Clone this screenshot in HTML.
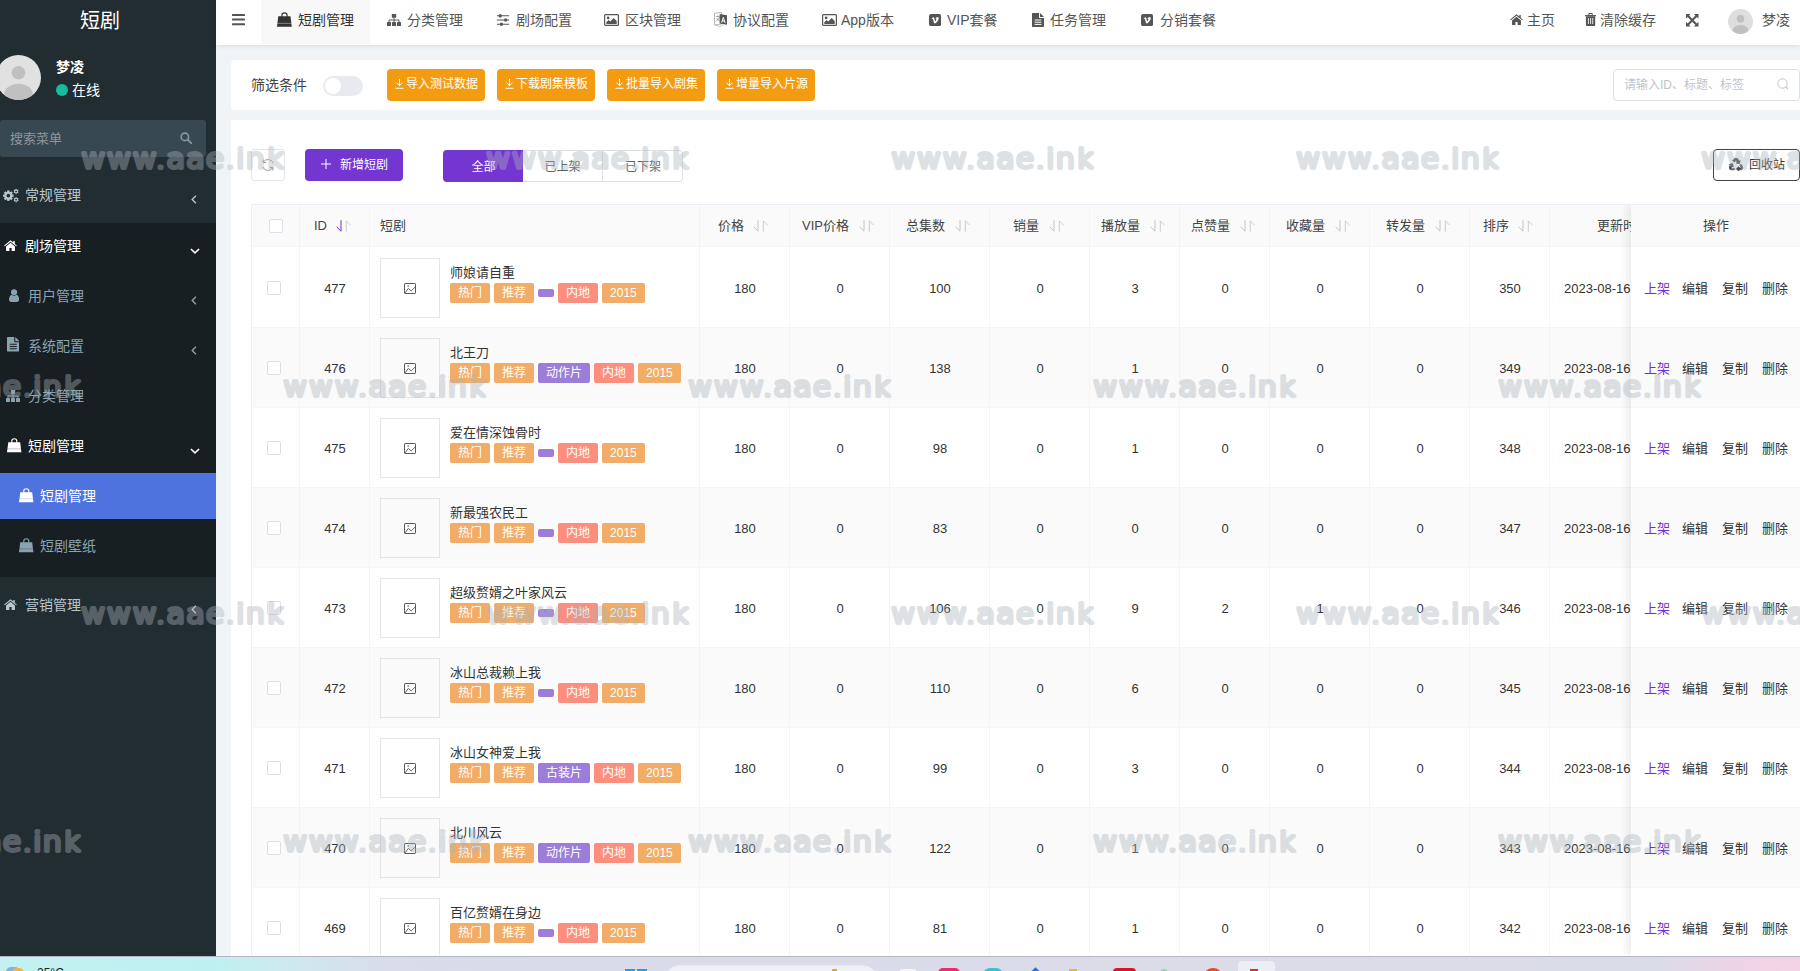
<!DOCTYPE html>
<html lang="zh-CN">
<head>
<meta charset="utf-8">
<title>短剧</title>
<style>
*{box-sizing:border-box;margin:0;padding:0}
html,body{width:1800px;height:971px;overflow:hidden;background:#f1f4f6;
  font-family:"Liberation Sans","Noto Sans CJK SC",sans-serif;font-size:14px;color:#444}
.abs{position:absolute}
svg{display:block}
/* ---------- sidebar ---------- */
#side{position:absolute;left:0;top:0;width:216px;height:956px;background:#222d32;overflow:hidden}
#logo{position:absolute;left:0;top:1px;width:200px;height:40px;line-height:40px;text-align:center;color:#fff;font-size:20px}
#avatar{position:absolute;left:-4px;top:55px;width:45px;height:45px;border-radius:50%;background:#e1e1e1;overflow:hidden}
#uname{position:absolute;left:56px;top:57px;color:#fff;font-weight:bold;font-size:14px;line-height:20px}
#ustat{position:absolute;left:56px;top:80px;color:#fff;font-size:14px;line-height:20px}
#ustat i{display:inline-block;width:12px;height:12px;border-radius:50%;background:#18bc9c;margin-right:4px;vertical-align:-1px}
#msearch{position:absolute;left:0;top:120px;width:206px;height:37px;background:#374850;border-radius:3px;color:#8c979c;font-size:13px;line-height:37px;padding-left:10px}
.mi{position:absolute;left:0;width:216px;height:50px;line-height:50px;color:#b8c7ce;font-size:14px}
.mi .ic{position:absolute;top:18px}
.mi .tx{position:absolute;top:0;white-space:nowrap}
.mi .ar{position:absolute;left:190px;top:20px}
.dark{background:#181f23}
/* ---------- top nav ---------- */
#nav{position:absolute;left:216px;top:0;width:1584px;height:45px;background:#fff;box-shadow:0 1px 4px rgba(0,21,41,.10)}
.tab{position:absolute;top:0;height:44px;line-height:40px;font-size:14px;color:#555;white-space:nowrap}
.tab .ic{position:absolute;top:13px}
.tab .tx{position:absolute;top:0}
.tabt{top:0;line-height:40px;font-size:14px;white-space:nowrap}
/* ---------- panels ---------- */
.panel{position:absolute;background:#fff;border-radius:4px}
.obtn{position:absolute;top:9px;height:32px;border-radius:4px;background:#f39c12;color:#fff;font-size:12px;line-height:31px;text-align:center;white-space:nowrap}
/* ---------- table ---------- */
#tbl{position:absolute;left:251px;top:204px;width:1560px;height:751px;overflow:hidden;border-top:1px solid #ebeef5;border-left:1px solid #ebeef5;background:#fff}
.hd{position:absolute;left:0;top:0;width:1560px;height:42px;background:#fafafa;border-bottom:1px solid #f5f5f8}
.row{position:absolute;left:0;width:1560px;height:80px;border-bottom:1px solid #f6f6f9}
.row.odd{background:#fafafa}
.vl{position:absolute;top:0;width:1px;height:751px;background:#f4f4f7}
.c{position:absolute;text-align:center;white-space:nowrap;color:#333;font-size:13px;line-height:20px}
.h{color:#444}
.cb{position:absolute;width:14px;height:14px;border:1px solid #dcdfe6;border-radius:2px;background:#fff}
.thumb{position:absolute;left:128px;width:60px;height:60px;border:1px solid #e4e4e4;background:#fff}
.odd .thumb{background:#fafafa}
.ttl{position:absolute;left:198px;font-size:13px;color:#333;line-height:20px;white-space:nowrap}
.tags{position:absolute;left:198px;white-space:nowrap;font-size:0}
.tg{display:inline-block;height:20px;line-height:20px;padding:0 8px;border-radius:2px;color:#fff;font-size:12px;margin-right:4px;vertical-align:top}
.t1{background:#f3ac66}.t2{background:#f3ac66}.t3{background:#9c7dd8}.t4{background:#fb8e7d}.t5{background:#f3ac66}
.t3e{display:inline-block;width:16px;height:8px;border-radius:2px;background:#9c7dd8;margin:6px 4px 0 0;vertical-align:top}
#fix{position:absolute;left:1379px;top:0;width:181px;height:751px;box-shadow:-4px 0 8px rgba(0,0,0,.08);background:transparent}
.op{position:absolute;font-size:13px;color:#333;line-height:20px;white-space:nowrap}
.op.p{color:#722ed1}
.wm{position:absolute;opacity:.39;pointer-events:none;overflow:visible}
#task{position:absolute;left:0;top:956px;width:1800px;height:15px;overflow:hidden;background:linear-gradient(90deg,#c3f1f1 0%,#bff0f1 12%,#cdeaee 16%,#d8dde9 21%,#d9dbe8 30%,#dcdce8 75%,#dadce8 92%,#ecd4e5 96%,#f3d3e3 100%);border-top:1px solid #b3b6c2}
</style>
</head>
<body>
<div id="side">
<div id="logo">短剧</div>
<div id="avatar"><svg width="45" height="45" viewBox="0 0 45 45"><circle cx="22.500" cy="17.800" r="6.800" fill="#c0c0c0"/><ellipse cx="22.500" cy="38.600" rx="14.200" ry="9.800" fill="#c0c0c0"/></svg></div>
<div id="uname">梦凌</div>
<div id="ustat"><i></i>在线</div>
<div id="msearch">搜索菜单<span class="abs" style="left:180px;top:12px"><svg width="12" height="12" viewBox="0 0 13 13" ><circle cx="5.300" cy="5.300" r="4" fill="none" stroke="#8c979c" stroke-width="1.8"/><path d="M8.300 8.300l3.800 3.800" stroke="#8c979c" stroke-width="2.1" stroke-linecap="round"/></svg></span></div>
<div class="abs dark" style="left:0;top:223px;width:216px;height:354px"></div>
<div class="abs" style="left:0;top:473px;width:216px;height:46px;background:#4e73df"></div>
<div class="mi" style="top:170px;color:#b8c7ce;"><span class="abs" style="left:3px;top:18px"><svg width="16" height="14.933333333333334" viewBox="0 0 15 14" ><rect x="3.9" y="2.29" width="2.2" height="2.4200000000000004" fill="#b8c7ce" transform="rotate(0.0 5 7.2)"/><rect x="3.9" y="2.29" width="2.2" height="2.4200000000000004" fill="#b8c7ce" transform="rotate(45.0 5 7.2)"/><rect x="3.9" y="2.29" width="2.2" height="2.4200000000000004" fill="#b8c7ce" transform="rotate(90.0 5 7.2)"/><rect x="3.9" y="2.29" width="2.2" height="2.4200000000000004" fill="#b8c7ce" transform="rotate(135.0 5 7.2)"/><rect x="3.9" y="2.29" width="2.2" height="2.4200000000000004" fill="#b8c7ce" transform="rotate(180.0 5 7.2)"/><rect x="3.9" y="2.29" width="2.2" height="2.4200000000000004" fill="#b8c7ce" transform="rotate(225.0 5 7.2)"/><rect x="3.9" y="2.29" width="2.2" height="2.4200000000000004" fill="#b8c7ce" transform="rotate(270.0 5 7.2)"/><rect x="3.9" y="2.29" width="2.2" height="2.4200000000000004" fill="#b8c7ce" transform="rotate(315.0 5 7.2)"/><circle cx="5" cy="7.2" r="3.7" fill="#b8c7ce"/><circle cx="5" cy="7.200" r="1.700" fill="#222d32"/><rect x="11.700000000000001" y="0.8400000000000002" width="1.2" height="1.32" fill="#b8c7ce" transform="rotate(0.0 12.3 3.2)"/><rect x="11.700000000000001" y="0.8400000000000002" width="1.2" height="1.32" fill="#b8c7ce" transform="rotate(60.0 12.3 3.2)"/><rect x="11.700000000000001" y="0.8400000000000002" width="1.2" height="1.32" fill="#b8c7ce" transform="rotate(120.0 12.3 3.2)"/><rect x="11.700000000000001" y="0.8400000000000002" width="1.2" height="1.32" fill="#b8c7ce" transform="rotate(180.0 12.3 3.2)"/><rect x="11.700000000000001" y="0.8400000000000002" width="1.2" height="1.32" fill="#b8c7ce" transform="rotate(240.0 12.3 3.2)"/><rect x="11.700000000000001" y="0.8400000000000002" width="1.2" height="1.32" fill="#b8c7ce" transform="rotate(300.0 12.3 3.2)"/><circle cx="12.3" cy="3.2" r="1.7" fill="#b8c7ce"/><circle cx="12.300" cy="3.200" r=".8" fill="#222d32"/><rect x="11.700000000000001" y="8.64" width="1.2" height="1.32" fill="#b8c7ce" transform="rotate(0.0 12.3 11)"/><rect x="11.700000000000001" y="8.64" width="1.2" height="1.32" fill="#b8c7ce" transform="rotate(60.0 12.3 11)"/><rect x="11.700000000000001" y="8.64" width="1.2" height="1.32" fill="#b8c7ce" transform="rotate(120.0 12.3 11)"/><rect x="11.700000000000001" y="8.64" width="1.2" height="1.32" fill="#b8c7ce" transform="rotate(180.0 12.3 11)"/><rect x="11.700000000000001" y="8.64" width="1.2" height="1.32" fill="#b8c7ce" transform="rotate(240.0 12.3 11)"/><rect x="11.700000000000001" y="8.64" width="1.2" height="1.32" fill="#b8c7ce" transform="rotate(300.0 12.3 11)"/><circle cx="12.3" cy="11" r="1.7" fill="#b8c7ce"/><circle cx="12.300" cy="11" r=".8" fill="#222d32"/></svg></span><span class="tx" style="left:25px">常规管理</span><span class="abs" style="left:191px;top:25px"><svg width="6" height="9" viewBox="0 0 6 9" ><path d="M4.900.8L1.200 4.500l3.700 3.700" fill="none" stroke="#b8c7ce" stroke-width="1.350"/></svg></span></div>
<div class="mi" style="top:221px;color:#fff;"><span class="abs" style="left:4px;top:19px"><svg width="13" height="11.142857142857142" viewBox="0 0 14 12" ><path d="M7 .3L.2 6l.7.850L7 1.800l6.100 5.050.7-.85L11.600 4.200V1H10v1.800z" fill="#fff"/><path d="M7 3L2.200 7v4.400c0 .3.300.6.600.6h3V8.600h2.400V12h3c.3 0 .6-.3.600-.6V7z" fill="#fff"/></svg></span><span class="tx" style="left:25px">剧场管理</span><span class="abs" style="left:190px;top:27px"><svg width="10" height="6" viewBox="0 0 10 6" ><path d="M.9 1L5 4.900 9.100 1" fill="none" stroke="#fff" stroke-width="1.600"/></svg></span></div>
<div class="mi" style="top:271px;color:#8aa4af;"><span class="abs" style="left:9px;top:18px"><svg width="10.153846153846153" height="12.923076923076923" viewBox="0 0 11 14" ><circle cx="5.500" cy="3.600" r="3.300" fill="#8aa4af"/><path d="M0 11.400c0-3 1.500-5 3-5.200.7.600 1.500 1 2.500 1s1.800-.4 2.500-1c1.500.2 3 2.200 3 5.200 0 1.600-1 2.600-2.400 2.600H2.400C1 14 0 13 0 11.400z" fill="#8aa4af"/></svg></span><span class="tx" style="left:28px">用户管理</span><span class="abs" style="left:191px;top:25px"><svg width="6" height="9" viewBox="0 0 6 9" ><path d="M4.900.8L1.200 4.500l3.700 3.700" fill="none" stroke="#8aa4af" stroke-width="1.350"/></svg></span></div>
<div class="mi" style="top:321px;color:#8aa4af;"><span class="abs" style="left:7px;top:16px"><svg width="12.428571428571429" height="14.5" viewBox="0 0 12 14" ><path d="M0 .6C0 .3.3 0 .6 0H7v4.400c0 .3.300.6.600.6H12v8.400c0 .3-.3.600-.6.600H.6C.3 14 0 13.700 0 13.400z" fill="#8aa4af"/><path d="M8 0l4 4H8z" fill="#8aa4af"/><path d="M2.600 7h6.800M2.600 9.200h6.800M2.600 11.400h6.800" stroke="#181f23" stroke-width="1" fill="none"/></svg></span><span class="tx" style="left:28px">系统配置</span><span class="abs" style="left:191px;top:25px"><svg width="6" height="9" viewBox="0 0 6 9" ><path d="M4.900.8L1.200 4.500l3.700 3.700" fill="none" stroke="#8aa4af" stroke-width="1.350"/></svg></span></div>
<div class="mi" style="top:371px;color:#8aa4af;"><span class="abs" style="left:6px;top:18px"><svg width="14" height="14" viewBox="0 0 16 16" ><rect x="5.5" y="1" width="5" height="4.4" rx=".6" fill="#8aa4af"/><rect x="0" y="10.4" width="4.6" height="4.4" rx=".6" fill="#8aa4af"/><rect x="5.7" y="10.4" width="4.6" height="4.4" rx=".6" fill="#8aa4af"/><rect x="11.4" y="10.4" width="4.6" height="4.4" rx=".6" fill="#8aa4af"/><path d="M8 5v5.5M2.3 10.5V8h11.4v2.5" fill="none" stroke="#8aa4af" stroke-width="1.1"/></svg></span><span class="tx" style="left:28px">分类管理</span></div>
<div class="mi" style="top:421px;color:#fff;"><span class="abs" style="left:7px;top:17px"><svg width="14.6" height="14.6" viewBox="0 0 15 15" ><path d="M1.300 4.300h12.200l1.300 10.400H0z" fill="#fff"/><path d="M4.900 6V3.400a2.600 2.600 0 0 1 5.200 0V6" fill="none" stroke="#fff" stroke-width="1.150"/><rect x=".3" y="10.900" width="14.300" height=".6" fill="#181f23" opacity=".45"/></svg></span><span class="tx" style="left:28px">短剧管理</span><span class="abs" style="left:190px;top:27px"><svg width="10" height="6" viewBox="0 0 10 6" ><path d="M.9 1L5 4.900 9.100 1" fill="none" stroke="#fff" stroke-width="1.600"/></svg></span></div>
<div class="mi" style="top:471px;color:#fff;"><span class="abs" style="left:19px;top:17px"><svg width="14.6" height="14.6" viewBox="0 0 15 15" ><path d="M1.300 4.300h12.200l1.300 10.400H0z" fill="#fff"/><path d="M4.900 6V3.400a2.600 2.600 0 0 1 5.200 0V6" fill="none" stroke="#fff" stroke-width="1.150"/><rect x=".3" y="10.900" width="14.300" height=".6" fill="#4e73df" opacity=".45"/></svg></span><span class="tx" style="left:40px">短剧管理</span></div>
<div class="mi" style="top:521px;color:#8aa4af;"><span class="abs" style="left:19px;top:17px"><svg width="14.6" height="14.6" viewBox="0 0 15 15" ><path d="M1.300 4.300h12.200l1.300 10.400H0z" fill="#8aa4af"/><path d="M4.900 6V3.400a2.600 2.600 0 0 1 5.200 0V6" fill="none" stroke="#8aa4af" stroke-width="1.150"/><rect x=".3" y="10.900" width="14.300" height=".6" fill="#181f23" opacity=".45"/></svg></span><span class="tx" style="left:40px">短剧壁纸</span></div>
<div class="mi" style="top:580px;color:#b8c7ce;"><span class="abs" style="left:4px;top:19px"><svg width="13" height="11.142857142857142" viewBox="0 0 14 12" ><path d="M7 .3L.2 6l.7.850L7 1.800l6.100 5.050.7-.85L11.600 4.200V1H10v1.800z" fill="#b8c7ce"/><path d="M7 3L2.200 7v4.400c0 .3.300.6.600.6h3V8.600h2.400V12h3c.3 0 .6-.3.600-.6V7z" fill="#b8c7ce"/></svg></span><span class="tx" style="left:25px">营销管理</span><span class="abs" style="left:191px;top:25px"><svg width="6" height="9" viewBox="0 0 6 9" ><path d="M4.900.8L1.200 4.500l3.700 3.700" fill="none" stroke="#b8c7ce" stroke-width="1.350"/></svg></span></div>
</div>
<div id="nav">
<span class="abs" style="left:16px;top:14px"><svg width="13" height="12" viewBox="0 0 13 12" ><rect x="0" y="0" width="13" height="2" rx=".5" fill="#555"/><rect x="0" y="4.600" width="13" height="2" rx=".5" fill="#555"/><rect x="0" y="9.200" width="13" height="2" rx=".5" fill="#555"/></svg></span>
<div class="abs" style="left:45px;top:0;width:109px;height:44px;background:#f8f8f8"></div>
<span class="abs" style="left:61px;top:12px"><svg width="15" height="15" viewBox="0 0 15 15" ><path d="M1.300 4.300h12.200l1.300 10.400H0z" fill="#333"/><path d="M4.900 6V3.400a2.600 2.600 0 0 1 5.200 0V6" fill="none" stroke="#333" stroke-width="1.150"/><rect x=".3" y="10.900" width="14.300" height=".7" fill="#fff" opacity=".55"/></svg></span><span class="abs tabt" style="left:82px;color:#333">短剧管理</span>
<span class="abs" style="left:171px;top:13px"><svg width="14" height="14" viewBox="0 0 16 16" ><rect x="5.5" y="1" width="5" height="4.4" rx=".6" fill="#555"/><rect x="0" y="10.4" width="4.6" height="4.4" rx=".6" fill="#555"/><rect x="5.7" y="10.4" width="4.6" height="4.4" rx=".6" fill="#555"/><rect x="11.4" y="10.4" width="4.6" height="4.4" rx=".6" fill="#555"/><path d="M8 5v5.5M2.3 10.5V8h11.4v2.5" fill="none" stroke="#555" stroke-width="1.1"/></svg></span><span class="abs tabt" style="left:191px;color:#555">分类管理</span>
<span class="abs" style="left:280px;top:13px"><svg width="14" height="14" viewBox="0 0 16 16" ><path d="M1 3.2h14M1 8h14M1 12.8h14" stroke="#555" stroke-width="1.3" fill="none"/><rect x="3.2" y="1.4" width="3.2" height="3.6" rx=".6" fill="#555"/><rect x="9.4" y="6.2" width="3.2" height="3.6" rx=".6" fill="#555"/><rect x="4.6" y="11" width="3.2" height="3.6" rx=".6" fill="#555"/></svg></span><span class="abs tabt" style="left:300px;color:#555">剧场配置</span>
<span class="abs" style="left:388px;top:14px"><svg width="15" height="12" viewBox="0 0 15 12" ><rect x=".6" y=".6" width="13.800" height="10.800" rx="1" fill="none" stroke="#555" stroke-width="1.200"/><circle cx="4.100" cy="3.900" r="1.350" fill="#555"/><path d="M2.300 9.900V8.300l2.300-2.200 1.600 1.500 3.500-3.600 3 2.900v3z" fill="#555"/></svg></span><span class="abs tabt" style="left:409px;color:#555">区块管理</span>
<span class="abs" style="left:498px;top:12px"><svg width="13" height="15" viewBox="0 0 13 15" ><path d="M.5 1.200L7.500.5v11.500l-7 1z" fill="#fff" stroke="#555" stroke-width=".8" opacity=".55"/><path d="M2 4.500h3.500M3.700 3.500v1M2.300 9c1.600-.8 2.500-2.300 2.800-4M2.600 6c.6 1.400 1.500 2.300 2.800 2.900" stroke="#555" stroke-width=".7" fill="none" opacity=".7"/><path d="M5.600 2l7.400 1.200v9.600l-7.400-1.300z" fill="#555"/><path d="M1.500 13.200l4.500 1.300 3-1.600" fill="none" stroke="#555" stroke-width=".7" opacity=".5"/><path d="M7.600 10.600l1.700-5.200 1.900 5.700M8.200 9h2.400" stroke="#fff" stroke-width=".95" fill="none"/></svg></span><span class="abs tabt" style="left:517px;color:#555">协议配置</span>
<span class="abs" style="left:606px;top:14px"><svg width="15" height="12" viewBox="0 0 15 12" ><rect x=".6" y=".6" width="13.800" height="10.800" rx="1" fill="none" stroke="#555" stroke-width="1.200"/><circle cx="4.100" cy="3.900" r="1.350" fill="#555"/><path d="M2.300 9.900V8.300l2.300-2.200 1.600 1.500 3.500-3.600 3 2.900v3z" fill="#555"/></svg></span><span class="abs tabt" style="left:625px;color:#555">App版本</span>
<span class="abs" style="left:712.5px;top:14px"><svg width="12.2" height="12.2" viewBox="0 0 14 14" ><rect x="0" y="0" width="14" height="14" rx="2.6" fill="#555"/><path d="M3 5.2c.8-.8 1.6-1.6 2.4-1.4 1 .2.8 2.4 1.4 4 .3.8.6.6 1.2-.4.6-1 .8-2-.4-1.6.5-1.6 1.600-2.400 2.800-2.200 1.300.3.900 2.200-.1 3.900-1 1.700-2.600 3.500-3.600 3.500-1.200 0-1.500-2.600-2-4.600-.3-1-.6-1-1.200-.6z" fill="#fff"/></svg></span><span class="abs tabt" style="left:731px;color:#555">VIP套餐</span>
<span class="abs" style="left:816px;top:13px"><svg width="12.0" height="14" viewBox="0 0 12 14" ><path d="M0 .6C0 .3.3 0 .6 0H7v4.400c0 .3.300.6.600.6H12v8.400c0 .3-.3.600-.6.600H.6C.3 14 0 13.700 0 13.400z" fill="#555"/><path d="M8 0l4 4H8z" fill="#555"/><path d="M2.600 7h6.800M2.600 9.200h6.800M2.600 11.400h6.800" stroke="#fff" stroke-width="1" fill="none"/></svg></span><span class="abs tabt" style="left:834px;color:#555">任务管理</span>
<span class="abs" style="left:925px;top:14px"><svg width="12.2" height="12.2" viewBox="0 0 14 14" ><rect x="0" y="0" width="14" height="14" rx="2.6" fill="#555"/><path d="M3 5.2c.8-.8 1.6-1.6 2.4-1.4 1 .2.8 2.4 1.4 4 .3.8.6.6 1.2-.4.6-1 .8-2-.4-1.6.5-1.6 1.600-2.400 2.800-2.200 1.300.3.900 2.200-.1 3.900-1 1.700-2.600 3.500-3.600 3.500-1.200 0-1.500-2.600-2-4.600-.3-1-.6-1-1.200-.6z" fill="#fff"/></svg></span><span class="abs tabt" style="left:944px;color:#555">分销套餐</span>
<span class="abs" style="left:1294px;top:14px"><svg width="13" height="11.142857142857142" viewBox="0 0 14 12" ><path d="M7 .3L.2 6l.7.850L7 1.800l6.100 5.050.7-.85L11.600 4.200V1H10v1.800z" fill="#555"/><path d="M7 3L2.200 7v4.400c0 .3.300.6.600.6h3V8.600h2.400V12h3c.3 0 .6-.3.600-.6V7z" fill="#555"/></svg></span><span class="abs tabt" style="left:1311px;color:#555">主页</span>
<span class="abs" style="left:1369px;top:13px"><svg width="11.142857142857142" height="13" viewBox="0 0 12 14" ><path d="M0 2.200h12v1.300H0z" fill="#555"/><path d="M4 2.200l.6-1.600h2.800l.6 1.600" fill="none" stroke="#555" stroke-width="1.1"/><path d="M1 3.500h10v9.100c0 .8-.6 1.400-1.400 1.400H2.400c-.8 0-1.400-.6-1.400-1.400z" fill="#555"/><path d="M3.700 5.400v6.400M6 5.400v6.400M8.300 5.400v6.400" stroke="#fff" stroke-width=".9"/></svg></span><span class="abs tabt" style="left:1384px;color:#555">清除缓存</span>
<span class="abs" style="left:1470px;top:14px"><svg width="12.5" height="12.5" viewBox="0 0 14 14" ><path d="M0 0h5.200L3.400 1.800 7 5.400l3.600-3.600L8.800 0H14v5.200l-1.800-1.800L8.600 7l3.600 3.600L14 8.800V14H8.800l1.800-1.800L7 8.600l-3.600 3.600L5.200 14H0V8.800l1.800 1.800L5.400 7 1.800 3.400 0 5.200z" fill="#555"/></svg></span><span class="abs tabt" style="left:1484px;color:#555"></span>
<div class="abs" style="left:1512px;top:9px;width:25px;height:25px;border-radius:50%;background:#dedede;overflow:hidden"><svg width="25" height="25" viewBox="0 0 45 45"><circle cx="22.500" cy="17.800" r="6.800" fill="#c0c0c0"/><ellipse cx="22.500" cy="38.600" rx="14.200" ry="9.800" fill="#c0c0c0"/></svg></div>
<span class="abs" style="left:-216px;top:0px"></span><span class="abs tabt" style="left:1546px;color:#555">梦凌</span>
</div>
<div class="panel" style="left:231px;top:60px;width:1580px;height:50px">
<span class="abs" style="left:20px;top:15px;line-height:20px;font-size:14px;color:#444">筛选条件</span>
<span class="abs" style="left:92px;top:16px;width:40px;height:20px;border-radius:10px;background:#e8eaef"><i class="abs" style="left:2px;top:2px;width:16px;height:16px;border-radius:50%;background:#fff"></i></span>
<div class="obtn" style="left:156px;width:98px"><span style="display:inline-block;vertical-align:-1px;margin-right:2px;margin-left:1px"><svg width="9" height="10" viewBox="0 0 9 10" ><path d="M4.500 0v6.500M1.600 3.800l2.900 2.900 2.900-2.900M.5 9.300h8" fill="none" stroke="#fff" stroke-width="1"/></svg></span>导入测试数据</div>
<div class="obtn" style="left:266px;width:98px"><span style="display:inline-block;vertical-align:-1px;margin-right:2px;margin-left:1px"><svg width="9" height="10" viewBox="0 0 9 10" ><path d="M4.500 0v6.500M1.600 3.800l2.900 2.900 2.900-2.900M.5 9.300h8" fill="none" stroke="#fff" stroke-width="1"/></svg></span>下载剧集模板</div>
<div class="obtn" style="left:376px;width:98px"><span style="display:inline-block;vertical-align:-1px;margin-right:2px;margin-left:1px"><svg width="9" height="10" viewBox="0 0 9 10" ><path d="M4.500 0v6.500M1.600 3.800l2.900 2.900 2.900-2.900M.5 9.300h8" fill="none" stroke="#fff" stroke-width="1"/></svg></span>批量导入剧集</div>
<div class="obtn" style="left:486px;width:98px"><span style="display:inline-block;vertical-align:-1px;margin-right:2px;margin-left:1px"><svg width="9" height="10" viewBox="0 0 9 10" ><path d="M4.500 0v6.500M1.600 3.800l2.900 2.900 2.900-2.900M.5 9.300h8" fill="none" stroke="#fff" stroke-width="1"/></svg></span>增量导入片源</div>
<div class="abs" style="left:1382px;top:9px;width:187px;height:32px;border:1px solid #dcdfe6;border-radius:4px;background:#fff;color:#c0c4cc;font-size:12px;line-height:31px;padding-left:10px">请输入ID、标题、标签<span class="abs" style="left:163px;top:8px"><svg width="12" height="12" viewBox="0 0 12 12"><circle cx="5.500" cy="5.500" r="4.700" fill="none" stroke="#c0c4cc" stroke-width="1"/><path d="M9 9l1.600 1.600" stroke="#c0c4cc" stroke-width="1.100" stroke-linecap="round"/></svg></span></div>
</div>
<div class="panel" style="left:231px;top:120px;width:1580px;height:860px;border-radius:0"></div>
<div class="abs" style="left:251px;top:149px;width:34px;height:32px;border:1px solid #e6e6e6;border-radius:3px;background:#fff"><span class="abs" style="left:9px;top:8px"><svg width="14" height="14" viewBox="0 0 14 14" ><path d="M12.200 5.200A5.500 5.500 0 0 0 2.300 4.200M1.800 8.800a5.500 5.500 0 0 0 9.900 1" fill="none" stroke="#999" stroke-width="1"/><path d="M2.200 1.500v3h3M11.800 12.500v-3h-3" fill="none" stroke="#999" stroke-width="1"/></svg></span></div>
<div class="abs" style="left:305px;top:149px;width:98px;height:32px;border-radius:4px;background:#7336d0;color:#fff;font-size:12px;line-height:32px"><span class="abs" style="left:16px;top:10px"><svg width="10" height="10" viewBox="0 0 11 11" ><path d="M5.500 0v11M0 5.500h11" stroke="#fff" stroke-width="1.100"/></svg></span><span class="abs" style="left:35px;top:0">新增短剧</span></div>
<div class="abs" style="left:443px;top:150px;width:240px;height:32px;border:1px solid #dcdfe6;border-radius:4px;background:#fff"></div>
<div class="abs" style="left:443px;top:150px;width:80px;height:32px;border-radius:4px 0 0 4px;background:#7336d0;color:#fff;font-size:12px;line-height:34px;text-align:center;padding-left:1px">全部</div>
<div class="abs" style="left:523px;top:150px;width:80px;height:32px;border-right:1px solid #dcdfe6;color:#606266;font-size:12px;line-height:34px;text-align:center">已上架</div>
<div class="abs" style="left:603px;top:150px;width:80px;height:32px;color:#606266;font-size:12px;line-height:34px;text-align:center">已下架</div>
<div class="abs" style="left:1713px;top:149px;width:87px;height:32px;border:1px solid #444;border-radius:4px;background:#fff;color:#333;font-size:12px;line-height:30px"><span class="abs" style="left:15px;top:8px"><svg width="14" height="13" viewBox="0 0 14 13" ><g fill="#444" stroke="#444" stroke-width=".7" stroke-linejoin="round"><path d="M5 1.200C5.500.4 6.300 0 7 0s1.500.4 2 1.200l1.200 2 1-.6-.8 3.200-3.200-.8 1-.6-1-1.800c-.2-.3-.5-.3-.7 0L5.700 4 3.600 2.800z"/><path d="M12.200 6.400l1.400 2.400c.8 1.400-.2 3-1.800 3H9.600v1.200L7.200 10.800l2.400-2.200v1.200h2c.4 0 .6-.4.400-.700l-1.200-2z"/><path d="M5.600 11.800H2.200c-1.600 0-2.600-1.600-1.800-3l1-1.800-1-.6 3.200-.8.800 3.200-1-.6-1 1.700c-.2.300 0 .7.400.700h2.800z"/></g></svg></span><span class="abs" style="left:35px;top:0">回收站</span></div>
<div id="tbl">
<div class="hd"></div>
<div class="row" style="top:43px">
<span class="cb" style="left:15px;top:33px"></span>
<span class="c" style="left:48px;width:70px;top:31px">477</span>
<span class="thumb" style="top:10px"><span class="abs" style="left:23px;top:24px"><svg width="12" height="11" viewBox="0 0 12 11" ><rect x=".5" y=".5" width="11" height="10" rx=".6" fill="none" stroke="#5a5a5a" stroke-width="1"/><path d="M.8 10.200L4.300 5.400 7.200 7.900 11.200 4" fill="none" stroke="#5a5a5a" stroke-width=".9"/><circle cx="4.200" cy="3.100" r=".75" fill="#5a5a5a"/></svg></span></span>
<span class="ttl" style="top:15px">师娘请自重</span>
<span class="tags" style="top:35px"><span class="tg t1">热门</span><span class="tg t2">推荐</span><span class="t3e"></span><span class="tg t4">内地</span><span class="tg t5">2015</span></span>
<span class="c" style="left:453px;width:80px;top:31px">180</span>
<span class="c" style="left:548px;width:80px;top:31px">0</span>
<span class="c" style="left:648px;width:80px;top:31px">100</span>
<span class="c" style="left:748px;width:80px;top:31px">0</span>
<span class="c" style="left:843px;width:80px;top:31px">3</span>
<span class="c" style="left:933px;width:80px;top:31px">0</span>
<span class="c" style="left:1028px;width:80px;top:31px">0</span>
<span class="c" style="left:1128px;width:80px;top:31px">0</span>
<span class="c" style="left:1218px;width:80px;top:31px">350</span>
<span class="c" style="left:1312px;top:31px;text-align:left">2023-08-16</span>
</div>
<div class="row odd" style="top:123px">
<span class="cb" style="left:15px;top:33px"></span>
<span class="c" style="left:48px;width:70px;top:31px">476</span>
<span class="thumb" style="top:10px"><span class="abs" style="left:23px;top:24px"><svg width="12" height="11" viewBox="0 0 12 11" ><rect x=".5" y=".5" width="11" height="10" rx=".6" fill="none" stroke="#5a5a5a" stroke-width="1"/><path d="M.8 10.200L4.300 5.400 7.200 7.900 11.200 4" fill="none" stroke="#5a5a5a" stroke-width=".9"/><circle cx="4.200" cy="3.100" r=".75" fill="#5a5a5a"/></svg></span></span>
<span class="ttl" style="top:15px">北王刀</span>
<span class="tags" style="top:35px"><span class="tg t1">热门</span><span class="tg t2">推荐</span><span class="tg t3">动作片</span><span class="tg t4">内地</span><span class="tg t5">2015</span></span>
<span class="c" style="left:453px;width:80px;top:31px">180</span>
<span class="c" style="left:548px;width:80px;top:31px">0</span>
<span class="c" style="left:648px;width:80px;top:31px">138</span>
<span class="c" style="left:748px;width:80px;top:31px">0</span>
<span class="c" style="left:843px;width:80px;top:31px">1</span>
<span class="c" style="left:933px;width:80px;top:31px">0</span>
<span class="c" style="left:1028px;width:80px;top:31px">0</span>
<span class="c" style="left:1128px;width:80px;top:31px">0</span>
<span class="c" style="left:1218px;width:80px;top:31px">349</span>
<span class="c" style="left:1312px;top:31px;text-align:left">2023-08-16</span>
</div>
<div class="row" style="top:203px">
<span class="cb" style="left:15px;top:33px"></span>
<span class="c" style="left:48px;width:70px;top:31px">475</span>
<span class="thumb" style="top:10px"><span class="abs" style="left:23px;top:24px"><svg width="12" height="11" viewBox="0 0 12 11" ><rect x=".5" y=".5" width="11" height="10" rx=".6" fill="none" stroke="#5a5a5a" stroke-width="1"/><path d="M.8 10.200L4.300 5.400 7.200 7.900 11.200 4" fill="none" stroke="#5a5a5a" stroke-width=".9"/><circle cx="4.200" cy="3.100" r=".75" fill="#5a5a5a"/></svg></span></span>
<span class="ttl" style="top:15px">爱在情深蚀骨时</span>
<span class="tags" style="top:35px"><span class="tg t1">热门</span><span class="tg t2">推荐</span><span class="t3e"></span><span class="tg t4">内地</span><span class="tg t5">2015</span></span>
<span class="c" style="left:453px;width:80px;top:31px">180</span>
<span class="c" style="left:548px;width:80px;top:31px">0</span>
<span class="c" style="left:648px;width:80px;top:31px">98</span>
<span class="c" style="left:748px;width:80px;top:31px">0</span>
<span class="c" style="left:843px;width:80px;top:31px">1</span>
<span class="c" style="left:933px;width:80px;top:31px">0</span>
<span class="c" style="left:1028px;width:80px;top:31px">0</span>
<span class="c" style="left:1128px;width:80px;top:31px">0</span>
<span class="c" style="left:1218px;width:80px;top:31px">348</span>
<span class="c" style="left:1312px;top:31px;text-align:left">2023-08-16</span>
</div>
<div class="row odd" style="top:283px">
<span class="cb" style="left:15px;top:33px"></span>
<span class="c" style="left:48px;width:70px;top:31px">474</span>
<span class="thumb" style="top:10px"><span class="abs" style="left:23px;top:24px"><svg width="12" height="11" viewBox="0 0 12 11" ><rect x=".5" y=".5" width="11" height="10" rx=".6" fill="none" stroke="#5a5a5a" stroke-width="1"/><path d="M.8 10.200L4.300 5.400 7.200 7.900 11.200 4" fill="none" stroke="#5a5a5a" stroke-width=".9"/><circle cx="4.200" cy="3.100" r=".75" fill="#5a5a5a"/></svg></span></span>
<span class="ttl" style="top:15px">新最强农民工</span>
<span class="tags" style="top:35px"><span class="tg t1">热门</span><span class="tg t2">推荐</span><span class="t3e"></span><span class="tg t4">内地</span><span class="tg t5">2015</span></span>
<span class="c" style="left:453px;width:80px;top:31px">180</span>
<span class="c" style="left:548px;width:80px;top:31px">0</span>
<span class="c" style="left:648px;width:80px;top:31px">83</span>
<span class="c" style="left:748px;width:80px;top:31px">0</span>
<span class="c" style="left:843px;width:80px;top:31px">0</span>
<span class="c" style="left:933px;width:80px;top:31px">0</span>
<span class="c" style="left:1028px;width:80px;top:31px">0</span>
<span class="c" style="left:1128px;width:80px;top:31px">0</span>
<span class="c" style="left:1218px;width:80px;top:31px">347</span>
<span class="c" style="left:1312px;top:31px;text-align:left">2023-08-16</span>
</div>
<div class="row" style="top:363px">
<span class="cb" style="left:15px;top:33px"></span>
<span class="c" style="left:48px;width:70px;top:31px">473</span>
<span class="thumb" style="top:10px"><span class="abs" style="left:23px;top:24px"><svg width="12" height="11" viewBox="0 0 12 11" ><rect x=".5" y=".5" width="11" height="10" rx=".6" fill="none" stroke="#5a5a5a" stroke-width="1"/><path d="M.8 10.200L4.300 5.400 7.200 7.900 11.200 4" fill="none" stroke="#5a5a5a" stroke-width=".9"/><circle cx="4.200" cy="3.100" r=".75" fill="#5a5a5a"/></svg></span></span>
<span class="ttl" style="top:15px">超级赘婿之叶家风云</span>
<span class="tags" style="top:35px"><span class="tg t1">热门</span><span class="tg t2">推荐</span><span class="t3e"></span><span class="tg t4">内地</span><span class="tg t5">2015</span></span>
<span class="c" style="left:453px;width:80px;top:31px">180</span>
<span class="c" style="left:548px;width:80px;top:31px">0</span>
<span class="c" style="left:648px;width:80px;top:31px">106</span>
<span class="c" style="left:748px;width:80px;top:31px">0</span>
<span class="c" style="left:843px;width:80px;top:31px">9</span>
<span class="c" style="left:933px;width:80px;top:31px">2</span>
<span class="c" style="left:1028px;width:80px;top:31px">1</span>
<span class="c" style="left:1128px;width:80px;top:31px">0</span>
<span class="c" style="left:1218px;width:80px;top:31px">346</span>
<span class="c" style="left:1312px;top:31px;text-align:left">2023-08-16</span>
</div>
<div class="row odd" style="top:443px">
<span class="cb" style="left:15px;top:33px"></span>
<span class="c" style="left:48px;width:70px;top:31px">472</span>
<span class="thumb" style="top:10px"><span class="abs" style="left:23px;top:24px"><svg width="12" height="11" viewBox="0 0 12 11" ><rect x=".5" y=".5" width="11" height="10" rx=".6" fill="none" stroke="#5a5a5a" stroke-width="1"/><path d="M.8 10.200L4.300 5.400 7.200 7.900 11.200 4" fill="none" stroke="#5a5a5a" stroke-width=".9"/><circle cx="4.200" cy="3.100" r=".75" fill="#5a5a5a"/></svg></span></span>
<span class="ttl" style="top:15px">冰山总裁赖上我</span>
<span class="tags" style="top:35px"><span class="tg t1">热门</span><span class="tg t2">推荐</span><span class="t3e"></span><span class="tg t4">内地</span><span class="tg t5">2015</span></span>
<span class="c" style="left:453px;width:80px;top:31px">180</span>
<span class="c" style="left:548px;width:80px;top:31px">0</span>
<span class="c" style="left:648px;width:80px;top:31px">110</span>
<span class="c" style="left:748px;width:80px;top:31px">0</span>
<span class="c" style="left:843px;width:80px;top:31px">6</span>
<span class="c" style="left:933px;width:80px;top:31px">0</span>
<span class="c" style="left:1028px;width:80px;top:31px">0</span>
<span class="c" style="left:1128px;width:80px;top:31px">0</span>
<span class="c" style="left:1218px;width:80px;top:31px">345</span>
<span class="c" style="left:1312px;top:31px;text-align:left">2023-08-16</span>
</div>
<div class="row" style="top:523px">
<span class="cb" style="left:15px;top:33px"></span>
<span class="c" style="left:48px;width:70px;top:31px">471</span>
<span class="thumb" style="top:10px"><span class="abs" style="left:23px;top:24px"><svg width="12" height="11" viewBox="0 0 12 11" ><rect x=".5" y=".5" width="11" height="10" rx=".6" fill="none" stroke="#5a5a5a" stroke-width="1"/><path d="M.8 10.200L4.300 5.400 7.200 7.900 11.200 4" fill="none" stroke="#5a5a5a" stroke-width=".9"/><circle cx="4.200" cy="3.100" r=".75" fill="#5a5a5a"/></svg></span></span>
<span class="ttl" style="top:15px">冰山女神爱上我</span>
<span class="tags" style="top:35px"><span class="tg t1">热门</span><span class="tg t2">推荐</span><span class="tg t3">古装片</span><span class="tg t4">内地</span><span class="tg t5">2015</span></span>
<span class="c" style="left:453px;width:80px;top:31px">180</span>
<span class="c" style="left:548px;width:80px;top:31px">0</span>
<span class="c" style="left:648px;width:80px;top:31px">99</span>
<span class="c" style="left:748px;width:80px;top:31px">0</span>
<span class="c" style="left:843px;width:80px;top:31px">3</span>
<span class="c" style="left:933px;width:80px;top:31px">0</span>
<span class="c" style="left:1028px;width:80px;top:31px">0</span>
<span class="c" style="left:1128px;width:80px;top:31px">0</span>
<span class="c" style="left:1218px;width:80px;top:31px">344</span>
<span class="c" style="left:1312px;top:31px;text-align:left">2023-08-16</span>
</div>
<div class="row odd" style="top:603px">
<span class="cb" style="left:15px;top:33px"></span>
<span class="c" style="left:48px;width:70px;top:31px">470</span>
<span class="thumb" style="top:10px"><span class="abs" style="left:23px;top:24px"><svg width="12" height="11" viewBox="0 0 12 11" ><rect x=".5" y=".5" width="11" height="10" rx=".6" fill="none" stroke="#5a5a5a" stroke-width="1"/><path d="M.8 10.200L4.300 5.400 7.200 7.900 11.200 4" fill="none" stroke="#5a5a5a" stroke-width=".9"/><circle cx="4.200" cy="3.100" r=".75" fill="#5a5a5a"/></svg></span></span>
<span class="ttl" style="top:15px">北川风云</span>
<span class="tags" style="top:35px"><span class="tg t1">热门</span><span class="tg t2">推荐</span><span class="tg t3">动作片</span><span class="tg t4">内地</span><span class="tg t5">2015</span></span>
<span class="c" style="left:453px;width:80px;top:31px">180</span>
<span class="c" style="left:548px;width:80px;top:31px">0</span>
<span class="c" style="left:648px;width:80px;top:31px">122</span>
<span class="c" style="left:748px;width:80px;top:31px">0</span>
<span class="c" style="left:843px;width:80px;top:31px">1</span>
<span class="c" style="left:933px;width:80px;top:31px">0</span>
<span class="c" style="left:1028px;width:80px;top:31px">0</span>
<span class="c" style="left:1128px;width:80px;top:31px">0</span>
<span class="c" style="left:1218px;width:80px;top:31px">343</span>
<span class="c" style="left:1312px;top:31px;text-align:left">2023-08-16</span>
</div>
<div class="row" style="top:683px">
<span class="cb" style="left:15px;top:33px"></span>
<span class="c" style="left:48px;width:70px;top:31px">469</span>
<span class="thumb" style="top:10px"><span class="abs" style="left:23px;top:24px"><svg width="12" height="11" viewBox="0 0 12 11" ><rect x=".5" y=".5" width="11" height="10" rx=".6" fill="none" stroke="#5a5a5a" stroke-width="1"/><path d="M.8 10.200L4.300 5.400 7.200 7.900 11.200 4" fill="none" stroke="#5a5a5a" stroke-width=".9"/><circle cx="4.200" cy="3.100" r=".75" fill="#5a5a5a"/></svg></span></span>
<span class="ttl" style="top:15px">百亿赘婿在身边</span>
<span class="tags" style="top:35px"><span class="tg t1">热门</span><span class="tg t2">推荐</span><span class="t3e"></span><span class="tg t4">内地</span><span class="tg t5">2015</span></span>
<span class="c" style="left:453px;width:80px;top:31px">180</span>
<span class="c" style="left:548px;width:80px;top:31px">0</span>
<span class="c" style="left:648px;width:80px;top:31px">81</span>
<span class="c" style="left:748px;width:80px;top:31px">0</span>
<span class="c" style="left:843px;width:80px;top:31px">1</span>
<span class="c" style="left:933px;width:80px;top:31px">0</span>
<span class="c" style="left:1028px;width:80px;top:31px">0</span>
<span class="c" style="left:1128px;width:80px;top:31px">0</span>
<span class="c" style="left:1218px;width:80px;top:31px">342</span>
<span class="c" style="left:1312px;top:31px;text-align:left">2023-08-16</span>
</div>
<div class="vl" style="left:47px"></div>
<div class="vl" style="left:117px"></div>
<div class="vl" style="left:447px"></div>
<div class="vl" style="left:537px"></div>
<div class="vl" style="left:637px"></div>
<div class="vl" style="left:737px"></div>
<div class="vl" style="left:837px"></div>
<div class="vl" style="left:927px"></div>
<div class="vl" style="left:1017px"></div>
<div class="vl" style="left:1117px"></div>
<div class="vl" style="left:1217px"></div>
<div class="vl" style="left:1297px"></div>
<span class="cb" style="left:17px;top:14px"></span>
<span class="c h" style="left:62px;top:11px">ID</span><span class="abs" style="left:84px;top:15px"><svg width="15" height="12" viewBox="0 0 15 12" ><path d="M5 .2V11.200L.6 6.800" fill="none" stroke="#722ed1" stroke-width="1"/><path d="M10.300 11.800V.8L14.700 5.200" fill="none" stroke="#c8ccd4" stroke-width="1"/></svg></span>
<span class="c h" style="left:128px;top:11px">短剧</span>
<span class="c h" style="left:466px;top:11px">价格</span><span class="abs" style="left:501px;top:15px"><svg width="15" height="12" viewBox="0 0 15 12" ><path d="M5 .2V11.200L.6 6.800" fill="none" stroke="#c0c4cc" stroke-width="1"/><path d="M10.300 11.800V.8L14.700 5.200" fill="none" stroke="#c8ccd4" stroke-width="1"/></svg></span>
<span class="c h" style="left:550px;top:11px">VIP价格</span><span class="abs" style="left:607px;top:15px"><svg width="15" height="12" viewBox="0 0 15 12" ><path d="M5 .2V11.200L.6 6.800" fill="none" stroke="#c0c4cc" stroke-width="1"/><path d="M10.300 11.800V.8L14.700 5.200" fill="none" stroke="#c8ccd4" stroke-width="1"/></svg></span>
<span class="c h" style="left:654px;top:11px">总集数</span><span class="abs" style="left:703px;top:15px"><svg width="15" height="12" viewBox="0 0 15 12" ><path d="M5 .2V11.200L.6 6.800" fill="none" stroke="#c0c4cc" stroke-width="1"/><path d="M10.300 11.800V.8L14.700 5.200" fill="none" stroke="#c8ccd4" stroke-width="1"/></svg></span>
<span class="c h" style="left:761px;top:11px">销量</span><span class="abs" style="left:797px;top:15px"><svg width="15" height="12" viewBox="0 0 15 12" ><path d="M5 .2V11.200L.6 6.800" fill="none" stroke="#c0c4cc" stroke-width="1"/><path d="M10.300 11.800V.8L14.700 5.200" fill="none" stroke="#c8ccd4" stroke-width="1"/></svg></span>
<span class="c h" style="left:849px;top:11px">播放量</span><span class="abs" style="left:898px;top:15px"><svg width="15" height="12" viewBox="0 0 15 12" ><path d="M5 .2V11.200L.6 6.800" fill="none" stroke="#c0c4cc" stroke-width="1"/><path d="M10.300 11.800V.8L14.700 5.200" fill="none" stroke="#c8ccd4" stroke-width="1"/></svg></span>
<span class="c h" style="left:939px;top:11px">点赞量</span><span class="abs" style="left:988px;top:15px"><svg width="15" height="12" viewBox="0 0 15 12" ><path d="M5 .2V11.200L.6 6.800" fill="none" stroke="#c0c4cc" stroke-width="1"/><path d="M10.300 11.800V.8L14.700 5.200" fill="none" stroke="#c8ccd4" stroke-width="1"/></svg></span>
<span class="c h" style="left:1034px;top:11px">收藏量</span><span class="abs" style="left:1083px;top:15px"><svg width="15" height="12" viewBox="0 0 15 12" ><path d="M5 .2V11.200L.6 6.800" fill="none" stroke="#c0c4cc" stroke-width="1"/><path d="M10.300 11.800V.8L14.700 5.200" fill="none" stroke="#c8ccd4" stroke-width="1"/></svg></span>
<span class="c h" style="left:1134px;top:11px">转发量</span><span class="abs" style="left:1183px;top:15px"><svg width="15" height="12" viewBox="0 0 15 12" ><path d="M5 .2V11.200L.6 6.800" fill="none" stroke="#c0c4cc" stroke-width="1"/><path d="M10.300 11.800V.8L14.700 5.200" fill="none" stroke="#c8ccd4" stroke-width="1"/></svg></span>
<span class="c h" style="left:1231px;top:11px">排序</span><span class="abs" style="left:1266px;top:15px"><svg width="15" height="12" viewBox="0 0 15 12" ><path d="M5 .2V11.200L.6 6.800" fill="none" stroke="#c0c4cc" stroke-width="1"/><path d="M10.300 11.800V.8L14.700 5.200" fill="none" stroke="#c8ccd4" stroke-width="1"/></svg></span>
<span class="c h" style="left:1345px;top:11px">更新时间</span>
<div id="fix">
<div class="abs" style="left:0;top:0;width:181px;height:42px;background:#fafafa;border-bottom:1px solid #f5f5f8"></div>
<div class="abs" style="left:0;top:43px;width:181px;height:80px;background:#fff;border-bottom:1px solid #f6f6f9"><span class="op p" style="left:13px;top:31px">上架</span><span class="op" style="left:51px;top:31px">编辑</span><span class="op" style="left:91px;top:31px">复制</span><span class="op" style="left:131px;top:31px">删除</span></div>
<div class="abs" style="left:0;top:123px;width:181px;height:80px;background:#fafafa;border-bottom:1px solid #f6f6f9"><span class="op p" style="left:13px;top:31px">上架</span><span class="op" style="left:51px;top:31px">编辑</span><span class="op" style="left:91px;top:31px">复制</span><span class="op" style="left:131px;top:31px">删除</span></div>
<div class="abs" style="left:0;top:203px;width:181px;height:80px;background:#fff;border-bottom:1px solid #f6f6f9"><span class="op p" style="left:13px;top:31px">上架</span><span class="op" style="left:51px;top:31px">编辑</span><span class="op" style="left:91px;top:31px">复制</span><span class="op" style="left:131px;top:31px">删除</span></div>
<div class="abs" style="left:0;top:283px;width:181px;height:80px;background:#fafafa;border-bottom:1px solid #f6f6f9"><span class="op p" style="left:13px;top:31px">上架</span><span class="op" style="left:51px;top:31px">编辑</span><span class="op" style="left:91px;top:31px">复制</span><span class="op" style="left:131px;top:31px">删除</span></div>
<div class="abs" style="left:0;top:363px;width:181px;height:80px;background:#fff;border-bottom:1px solid #f6f6f9"><span class="op p" style="left:13px;top:31px">上架</span><span class="op" style="left:51px;top:31px">编辑</span><span class="op" style="left:91px;top:31px">复制</span><span class="op" style="left:131px;top:31px">删除</span></div>
<div class="abs" style="left:0;top:443px;width:181px;height:80px;background:#fafafa;border-bottom:1px solid #f6f6f9"><span class="op p" style="left:13px;top:31px">上架</span><span class="op" style="left:51px;top:31px">编辑</span><span class="op" style="left:91px;top:31px">复制</span><span class="op" style="left:131px;top:31px">删除</span></div>
<div class="abs" style="left:0;top:523px;width:181px;height:80px;background:#fff;border-bottom:1px solid #f6f6f9"><span class="op p" style="left:13px;top:31px">上架</span><span class="op" style="left:51px;top:31px">编辑</span><span class="op" style="left:91px;top:31px">复制</span><span class="op" style="left:131px;top:31px">删除</span></div>
<div class="abs" style="left:0;top:603px;width:181px;height:80px;background:#fafafa;border-bottom:1px solid #f6f6f9"><span class="op p" style="left:13px;top:31px">上架</span><span class="op" style="left:51px;top:31px">编辑</span><span class="op" style="left:91px;top:31px">复制</span><span class="op" style="left:131px;top:31px">删除</span></div>
<div class="abs" style="left:0;top:683px;width:181px;height:80px;background:#fff;border-bottom:1px solid #f6f6f9"><span class="op p" style="left:13px;top:31px">上架</span><span class="op" style="left:51px;top:31px">编辑</span><span class="op" style="left:91px;top:31px">复制</span><span class="op" style="left:131px;top:31px">删除</span></div>
<span class="c h" style="left:72px;top:11px">操作</span>
</div>
</div>
<svg class="wm" style="left:75px;top:134px" width="230" height="46"><text transform="translate(6.200,34) scale(1.118,1)" x="0" y="0" font-family="DejaVu Sans Light, DejaVu Sans, sans-serif" font-weight="200" font-size="27" letter-spacing="1.0" fill="#abb4bc" stroke="#abb4bc" stroke-width="3.9" stroke-linejoin="round" stroke-linecap="round">www.aae.ink</text></svg>
<svg class="wm" style="left:480px;top:134px" width="230" height="46"><text transform="translate(6.200,34) scale(1.118,1)" x="0" y="0" font-family="DejaVu Sans Light, DejaVu Sans, sans-serif" font-weight="200" font-size="27" letter-spacing="1.0" fill="#abb4bc" stroke="#abb4bc" stroke-width="3.9" stroke-linejoin="round" stroke-linecap="round">www.aae.ink</text></svg>
<svg class="wm" style="left:885px;top:134px" width="230" height="46"><text transform="translate(6.200,34) scale(1.118,1)" x="0" y="0" font-family="DejaVu Sans Light, DejaVu Sans, sans-serif" font-weight="200" font-size="27" letter-spacing="1.0" fill="#abb4bc" stroke="#abb4bc" stroke-width="3.9" stroke-linejoin="round" stroke-linecap="round">www.aae.ink</text></svg>
<svg class="wm" style="left:1290px;top:134px" width="230" height="46"><text transform="translate(6.200,34) scale(1.118,1)" x="0" y="0" font-family="DejaVu Sans Light, DejaVu Sans, sans-serif" font-weight="200" font-size="27" letter-spacing="1.0" fill="#abb4bc" stroke="#abb4bc" stroke-width="3.9" stroke-linejoin="round" stroke-linecap="round">www.aae.ink</text></svg>
<svg class="wm" style="left:1695px;top:134px" width="230" height="46"><text transform="translate(6.200,34) scale(1.118,1)" x="0" y="0" font-family="DejaVu Sans Light, DejaVu Sans, sans-serif" font-weight="200" font-size="27" letter-spacing="1.0" fill="#abb4bc" stroke="#abb4bc" stroke-width="3.9" stroke-linejoin="round" stroke-linecap="round">www.aae.ink</text></svg>
<svg class="wm" style="left:75px;top:589px" width="230" height="46"><text transform="translate(6.200,34) scale(1.118,1)" x="0" y="0" font-family="DejaVu Sans Light, DejaVu Sans, sans-serif" font-weight="200" font-size="27" letter-spacing="1.0" fill="#abb4bc" stroke="#abb4bc" stroke-width="3.9" stroke-linejoin="round" stroke-linecap="round">www.aae.ink</text></svg>
<svg class="wm" style="left:480px;top:589px" width="230" height="46"><text transform="translate(6.200,34) scale(1.118,1)" x="0" y="0" font-family="DejaVu Sans Light, DejaVu Sans, sans-serif" font-weight="200" font-size="27" letter-spacing="1.0" fill="#abb4bc" stroke="#abb4bc" stroke-width="3.9" stroke-linejoin="round" stroke-linecap="round">www.aae.ink</text></svg>
<svg class="wm" style="left:885px;top:589px" width="230" height="46"><text transform="translate(6.200,34) scale(1.118,1)" x="0" y="0" font-family="DejaVu Sans Light, DejaVu Sans, sans-serif" font-weight="200" font-size="27" letter-spacing="1.0" fill="#abb4bc" stroke="#abb4bc" stroke-width="3.9" stroke-linejoin="round" stroke-linecap="round">www.aae.ink</text></svg>
<svg class="wm" style="left:1290px;top:589px" width="230" height="46"><text transform="translate(6.200,34) scale(1.118,1)" x="0" y="0" font-family="DejaVu Sans Light, DejaVu Sans, sans-serif" font-weight="200" font-size="27" letter-spacing="1.0" fill="#abb4bc" stroke="#abb4bc" stroke-width="3.9" stroke-linejoin="round" stroke-linecap="round">www.aae.ink</text></svg>
<svg class="wm" style="left:1695px;top:589px" width="230" height="46"><text transform="translate(6.200,34) scale(1.118,1)" x="0" y="0" font-family="DejaVu Sans Light, DejaVu Sans, sans-serif" font-weight="200" font-size="27" letter-spacing="1.0" fill="#abb4bc" stroke="#abb4bc" stroke-width="3.9" stroke-linejoin="round" stroke-linecap="round">www.aae.ink</text></svg>
<svg class="wm" style="left:-128px;top:361.5px" width="230" height="46"><text transform="translate(6.200,34) scale(1.118,1)" x="0" y="0" font-family="DejaVu Sans Light, DejaVu Sans, sans-serif" font-weight="200" font-size="27" letter-spacing="1.0" fill="#abb4bc" stroke="#abb4bc" stroke-width="3.9" stroke-linejoin="round" stroke-linecap="round">www.aae.ink</text></svg>
<svg class="wm" style="left:277px;top:361.5px" width="230" height="46"><text transform="translate(6.200,34) scale(1.118,1)" x="0" y="0" font-family="DejaVu Sans Light, DejaVu Sans, sans-serif" font-weight="200" font-size="27" letter-spacing="1.0" fill="#abb4bc" stroke="#abb4bc" stroke-width="3.9" stroke-linejoin="round" stroke-linecap="round">www.aae.ink</text></svg>
<svg class="wm" style="left:682px;top:361.5px" width="230" height="46"><text transform="translate(6.200,34) scale(1.118,1)" x="0" y="0" font-family="DejaVu Sans Light, DejaVu Sans, sans-serif" font-weight="200" font-size="27" letter-spacing="1.0" fill="#abb4bc" stroke="#abb4bc" stroke-width="3.9" stroke-linejoin="round" stroke-linecap="round">www.aae.ink</text></svg>
<svg class="wm" style="left:1087px;top:361.5px" width="230" height="46"><text transform="translate(6.200,34) scale(1.118,1)" x="0" y="0" font-family="DejaVu Sans Light, DejaVu Sans, sans-serif" font-weight="200" font-size="27" letter-spacing="1.0" fill="#abb4bc" stroke="#abb4bc" stroke-width="3.9" stroke-linejoin="round" stroke-linecap="round">www.aae.ink</text></svg>
<svg class="wm" style="left:1492px;top:361.5px" width="230" height="46"><text transform="translate(6.200,34) scale(1.118,1)" x="0" y="0" font-family="DejaVu Sans Light, DejaVu Sans, sans-serif" font-weight="200" font-size="27" letter-spacing="1.0" fill="#abb4bc" stroke="#abb4bc" stroke-width="3.9" stroke-linejoin="round" stroke-linecap="round">www.aae.ink</text></svg>
<svg class="wm" style="left:-128px;top:816.5px" width="230" height="46"><text transform="translate(6.200,34) scale(1.118,1)" x="0" y="0" font-family="DejaVu Sans Light, DejaVu Sans, sans-serif" font-weight="200" font-size="27" letter-spacing="1.0" fill="#abb4bc" stroke="#abb4bc" stroke-width="3.9" stroke-linejoin="round" stroke-linecap="round">www.aae.ink</text></svg>
<svg class="wm" style="left:277px;top:816.5px" width="230" height="46"><text transform="translate(6.200,34) scale(1.118,1)" x="0" y="0" font-family="DejaVu Sans Light, DejaVu Sans, sans-serif" font-weight="200" font-size="27" letter-spacing="1.0" fill="#abb4bc" stroke="#abb4bc" stroke-width="3.9" stroke-linejoin="round" stroke-linecap="round">www.aae.ink</text></svg>
<svg class="wm" style="left:682px;top:816.5px" width="230" height="46"><text transform="translate(6.200,34) scale(1.118,1)" x="0" y="0" font-family="DejaVu Sans Light, DejaVu Sans, sans-serif" font-weight="200" font-size="27" letter-spacing="1.0" fill="#abb4bc" stroke="#abb4bc" stroke-width="3.9" stroke-linejoin="round" stroke-linecap="round">www.aae.ink</text></svg>
<svg class="wm" style="left:1087px;top:816.5px" width="230" height="46"><text transform="translate(6.200,34) scale(1.118,1)" x="0" y="0" font-family="DejaVu Sans Light, DejaVu Sans, sans-serif" font-weight="200" font-size="27" letter-spacing="1.0" fill="#abb4bc" stroke="#abb4bc" stroke-width="3.9" stroke-linejoin="round" stroke-linecap="round">www.aae.ink</text></svg>
<svg class="wm" style="left:1492px;top:816.5px" width="230" height="46"><text transform="translate(6.200,34) scale(1.118,1)" x="0" y="0" font-family="DejaVu Sans Light, DejaVu Sans, sans-serif" font-weight="200" font-size="27" letter-spacing="1.0" fill="#abb4bc" stroke="#abb4bc" stroke-width="3.9" stroke-linejoin="round" stroke-linecap="round">www.aae.ink</text></svg>
<div id="task">
<span class="abs" style="left:37px;top:9px;font-size:12px;line-height:14px;color:#222">25°C</span>
<span class="abs" style="left:6px;top:10px;width:14px;height:10px;border-radius:6px;background:#7fb2e8"></span>
<span class="abs" style="left:12px;top:11px;width:12px;height:10px;border-radius:6px;background:#f5b53c"></span>
<span class="abs" style="left:625px;top:12px;width:10px;height:6px;background:#1d9fe6"></span>
<span class="abs" style="left:637px;top:12px;width:10px;height:6px;background:#1d9fe6"></span>
<span class="abs" style="left:664px;top:8px;width:214px;height:30px;border-radius:15px;background:#eef0f6;border:1px solid #e6e6ee"></span>
<span class="abs" style="left:832px;top:12px;width:5px;height:5px;background:#e89a3c;border-radius:1px"></span>
<span class="abs" style="left:900px;top:12px;width:16px;height:8px;background:#f4f4f8;border-radius:2px"></span>
<span class="abs" style="left:938px;top:11px;width:22px;height:10px;border-radius:5px;background:#f02a6e"></span>
<span class="abs" style="left:983px;top:11px;width:20px;height:14px;border-radius:10px;background:#33c2d6"></span>
<span class="abs" style="left:1031px;top:12px;width:9px;height:9px;background:#2a6fd0;transform:rotate(45deg)"></span>
<span class="abs" style="left:1069px;top:12px;width:8px;height:6px;background:#f0b429"></span>
<span class="abs" style="left:1113px;top:11px;width:23px;height:10px;border-radius:4px;background:#e0102a"></span>
<span class="abs" style="left:1160px;top:12px;width:8px;height:8px;border-radius:50%;background:#8fd4a0"></span>
<span class="abs" style="left:1204px;top:11px;width:18px;height:16px;border-radius:50%;background:#e8482e"></span>
<span class="abs" style="left:1238px;top:4px;width:37px;height:20px;border-radius:4px;background:#eceef5"></span>
<span class="abs" style="left:1250px;top:12px;width:8px;height:4px;background:#d8322a"></span>
</div>
</body>
</html>
